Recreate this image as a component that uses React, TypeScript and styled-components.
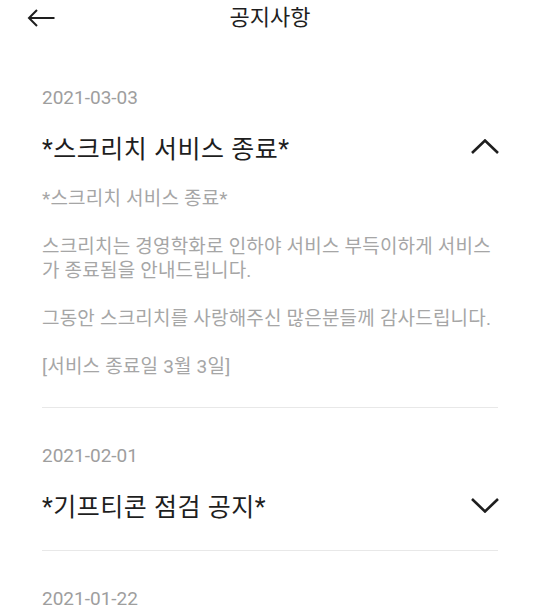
import React, { useState } from 'react'
import styled, { createGlobalStyle } from 'styled-components'

type Notice = {
  date: string
  title: string
  body: string[]
}

const notices: Notice[] = [
  {
    date: '2021-03-03',
    title: '*스크리치 서비스 종료*',
    body: [
      '*스크리치 서비스 종료*',
      '스크리치는 경영학화로 인하야 서비스 부득이하게 서비스가 종료됨을 안내드립니다.',
      '그동안 스크리치를 사랑해주신 많은분들께 감사드립니다.',
      '[서비스 종료일 3월 3일]',
    ],
  },
  {
    date: '2021-02-01',
    title: '*기프티콘 점검 공지*',
    body: ['*기프티콘 점검 공지*', '기프티콘 서비스 점검이 진행될 예정입니다.'],
  },
  {
    date: '2021-01-22',
    title: '*서비스 점검 안내*',
    body: ['*서비스 점검 안내*'],
  },
]

const Chevron = ({ open }: { open: boolean }) => (
  <svg width="30" height="16" viewBox="0 0 30 16" fill="none">
    <polyline
      points={open ? '2,14 15,1.5 28,14' : '2,2 15,14.5 28,2'}
      stroke="#1e1e1e"
      strokeWidth="2.6"
      strokeLinejoin="miter"
    />
  </svg>
)

const BackArrow = () => (
  <svg width="28" height="18" viewBox="0 0 28 18" fill="none">
    <path d="M27.5 9H2M10 1L2 9l8 8" stroke="#1e1e1e" strokeWidth="2" />
  </svg>
)

const NoticeItem = ({ notice, defaultOpen }: { notice: Notice; defaultOpen: boolean }) => {
  const [open, setOpen] = useState(defaultOpen)

  return (
    <ItemWrapper>
      <DateText>{notice.date}</DateText>
      <TitleRow onClick={() => setOpen(!open)}>
        <TitleText>{notice.title}</TitleText>
        <Chevron open={open} />
      </TitleRow>
      {open && (
        <Body>
          {notice.body.map((line, i) => (
            <BodyLine key={i}>{line}</BodyLine>
          ))}
        </Body>
      )}
    </ItemWrapper>
  )
}

export default function App() {
  return (
    <>
      <GlobalStyle />
      <Page>
        <Header>
          <BackButton>
            <BackArrow />
          </BackButton>
          <HeaderTitle>공지사항</HeaderTitle>
          <span />
        </Header>
        <List>
          {notices.map((n, i) => (
            <NoticeItem notice={n} key={n.date} defaultOpen={i === 0} />
          ))}
        </List>
      </Page>
    </>
  )
}

const GlobalStyle = createGlobalStyle`
  body {
    margin: 0;
    background: #ffffff;
    font-family: 'Roboto', 'Noto Sans CJK KR', sans-serif;
  }
`

const Page = styled.div`
  width: 540px;
  min-height: 616px;
  background: #ffffff;
  overflow: hidden;
`

const Header = styled.div`
  display: grid;
  grid-template-columns: 1fr auto 1fr;
  align-items: center;
  height: 36px;
`

const BackButton = styled.div`
  display: flex;
  align-items: center;
  padding-left: 27px;
  cursor: pointer;
`

const HeaderTitle = styled.div`
  font-size: 22px;
  color: #1e1e1e;
  line-height: 26px;
`

const List = styled.div`
  padding: 0 42px;
  margin-top: 14px;
`

const ItemWrapper = styled.div`
  padding: 36px 0 25px;
  border-bottom: 1px solid #e8e8e8;
`

const DateText = styled.div`
  font-size: 19px;
  line-height: 24px;
  color: #9e9e9e;
`

const TitleRow = styled.div`
  display: flex;
  align-items: center;
  justify-content: space-between;
  height: 40px;
  margin-top: 17px;
  margin-right: -2px;
  cursor: pointer;
`

const TitleText = styled.div`
  font-size: 25px;
  letter-spacing: 0.5px;
  color: #1e1e1e;
`

const Body = styled.div`
  margin: 20px 0 3px;
  display: flex;
  flex-direction: column;
  gap: 24px;
`

const BodyLine = styled.p`
  margin: 0;
  font-size: 19px;
  letter-spacing: 0.2px;
  line-height: 24px;
  color: #a6a6a6;
  word-break: break-all;
`
